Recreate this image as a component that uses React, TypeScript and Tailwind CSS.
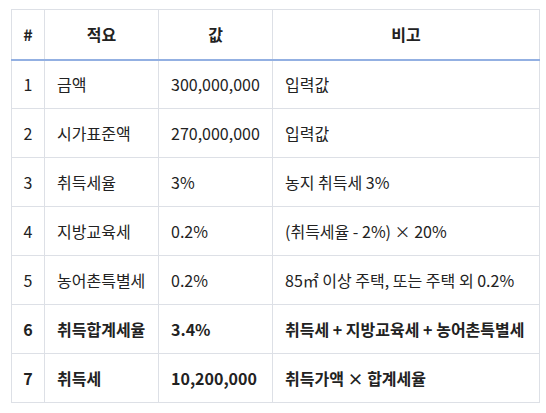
import React from "react";

const rows: { n: string; a: string; v: string; r: string; bold?: boolean }[] = [
  { n: "1", a: "금액", v: "300,000,000", r: "입력값" },
  { n: "2", a: "시가표준액", v: "270,000,000", r: "입력값" },
  { n: "3", a: "취득세율", v: "3%", r: "농지 취득세 3%" },
  { n: "4", a: "지방교육세", v: "0.2%", r: "(취득세율 - 2%) × 20%" },
  { n: "5", a: "농어촌특별세", v: "0.2%", r: "85㎡ 이상 주택, 또는 주택 외 0.2%" },
  { n: "6", a: "취득합계세율", v: "3.4%", r: "취득세 + 지방교육세 + 농어촌특별세", bold: true },
  { n: "7", a: "취득세", v: "10,200,000", r: "취득가액 × 합계세율", bold: true },
];

export default function App() {
  return (
    <div
      className="w-[546px] h-[413px] bg-white pl-[11px] pt-[9px] text-[16px] text-[#222]"
      style={{ fontFamily: '"Noto Sans CJK KR", "Noto Sans", sans-serif' }}
    >
      <table className="table-fixed border-collapse w-[528px]">
        <colgroup>
          <col className="w-[33px]" />
          <col className="w-[114px]" />
          <col className="w-[114px]" />
          <col className="w-[267px]" />
        </colgroup>
        <thead>
          <tr className="h-[50px]">
            {["#", "적요", "값", "비고"].map((h) => (
              <th
                key={h}
                className="border border-[#dde0e6] border-b-2 border-b-[#93b0e2] font-bold text-center p-0"
              >
                {h}
              </th>
            ))}
          </tr>
        </thead>
        <tbody>
          {rows.map((r) => (
            <tr key={r.n} className={`h-[49px] ${r.bold ? "font-bold" : "font-normal"}`}>
              <td className="border border-[#dde0e6] text-center p-0">{r.n}</td>
              <td className="border border-[#dde0e6] px-[12px] py-0 whitespace-nowrap">{r.a}</td>
              <td className="border border-[#dde0e6] px-[12px] py-0 whitespace-nowrap">{r.v}</td>
              <td className="border border-[#dde0e6] px-[12px] py-0 whitespace-nowrap">{r.r}</td>
            </tr>
          ))}
        </tbody>
      </table>
    </div>
  );
}
